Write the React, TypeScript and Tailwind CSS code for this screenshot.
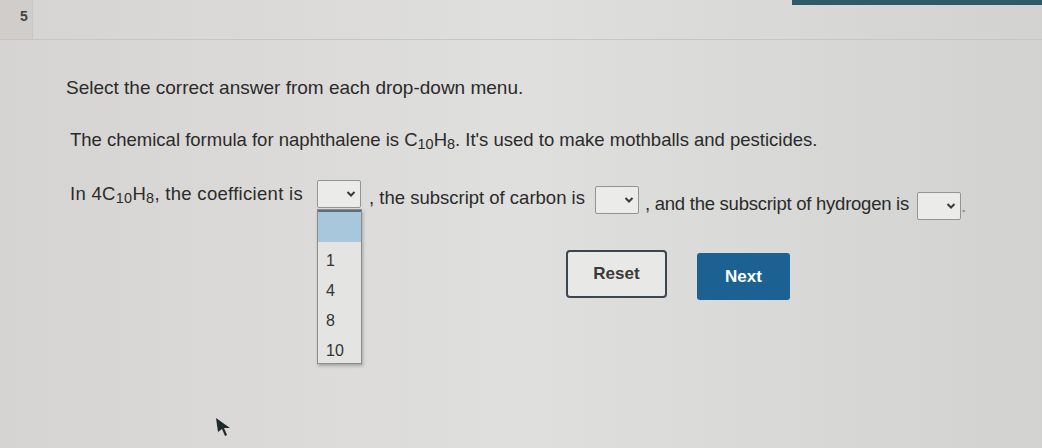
import React from 'react';

const Select: React.FC<{ className?: string }> = ({ className }) => (
  <span
    className={`inline-flex shrink-0 items-center justify-end w-[44px] h-[28px] border border-[#949494] bg-[#ebebe9] rounded-[2px] pr-[4px] ${className ?? ''}`}
  >
    <svg width="10" height="8" viewBox="0 0 10 8">
      <path d="M1.5 2 L5 5.5 L8.5 2" fill="none" stroke="#3a3a3a" strokeWidth="2" />
    </svg>
  </span>
);

const Formula: React.FC<{ coef?: string }> = ({ coef }) => (
  <span>
    {coef}C<sub className="text-[0.78em] relative top-[3px]">10</sub>H<sub className="text-[0.78em] relative top-[3px]">8</sub>
  </span>
);

export default function App() {
  return (
    <div className="relative w-[1042px] h-[448px] overflow-hidden bg-gradient-to-r from-[#d6d4d2] via-[#dfdfdd] to-[#d2d2d0] text-[#2b2b2b] font-['Liberation_Sans',Arial,sans-serif]">
      {/* top strip */}
      <div className="flex h-[40px] border-b border-[#c6c6c4]">
        <div className="w-[33px] border-r border-[#c6c6c4] bg-[#d0cdcb] pt-[6px] pl-[20px] text-[14px] font-bold text-[#444]">
          5
        </div>
        <div className="flex-1 flex justify-end">
          <div className="w-[250px] h-[5px] bg-[#2f5b68]" />
        </div>
      </div>

      <div className="pl-[66px] pt-[36px]">
        <p className="text-[19px] leading-[24px]">Select the correct answer from each drop-down menu.</p>

        <p className="mt-[28px] ml-[4px] text-[18.5px] leading-[24px]">
          The chemical formula for naphthalene is <Formula />. It's used to make mothballs and pesticides.
        </p>

        <div className="mt-[28px] ml-[4px] flex items-start text-[18.5px] leading-[24px] whitespace-nowrap">
          <span className="mt-[2px] tracking-[0.3px]">
            In <Formula coef="4" />, the coefficient is
          </span>
          <span className="relative ml-[14px]">
            <Select />
            {/* open dropdown */}
            <div className="absolute left-0 top-[29px] w-[45px] h-[155px] border border-[#8c8c8c] bg-[#e4e4e2] shadow-[1px_2px_3px_rgba(0,0,0,0.25)] flex flex-col text-[16px] text-[#333] z-10">
              <div className="h-[32px] bg-[#a9c7dc] border-t-2 border-[#5a6e80]" />
              <div className="pl-[8px] pt-[8px] flex flex-col gap-[8px] leading-[22px]">
                <span>1</span>
                <span>4</span>
                <span>8</span>
                <span>10</span>
              </div>
            </div>
          </span>
          <span className="ml-[8px] mt-[6px]">, the subscript of carbon is</span>
          <Select className="ml-[10px] mt-[6px]" />
          <span className="ml-[6px] mt-[12px] tracking-[-0.25px]">, and the subscript of hydrogen is</span>
          <Select className="ml-[8px] mt-[12px]" />
          <span className="text-[#888] mt-[14px]">.</span>
        </div>

        <div className="flex gap-[30px] pl-[500px] mt-[30px]">
          <button className="w-[101px] h-[48px] rounded-[4px] border-2 border-[#3c4650] bg-[#e8e8e6] text-[17px] font-bold text-[#3a3a3a]">
            Reset
          </button>
          <button className="w-[93px] h-[47px] mt-[3px] rounded-[3px] bg-[#1b6192] text-[17px] font-bold text-white">
            Next
          </button>
        </div>
      </div>

      {/* mouse cursor */}
      <svg className="absolute left-[214px] top-[416px]" width="18" height="22" viewBox="0 0 18 22">
        <path d="M2 2 L16 12 L10 12 L13 19 L11 20 L8 13 L4 16 Z" fill="#1e2a2a" />
      </svg>
    </div>
  );
}
